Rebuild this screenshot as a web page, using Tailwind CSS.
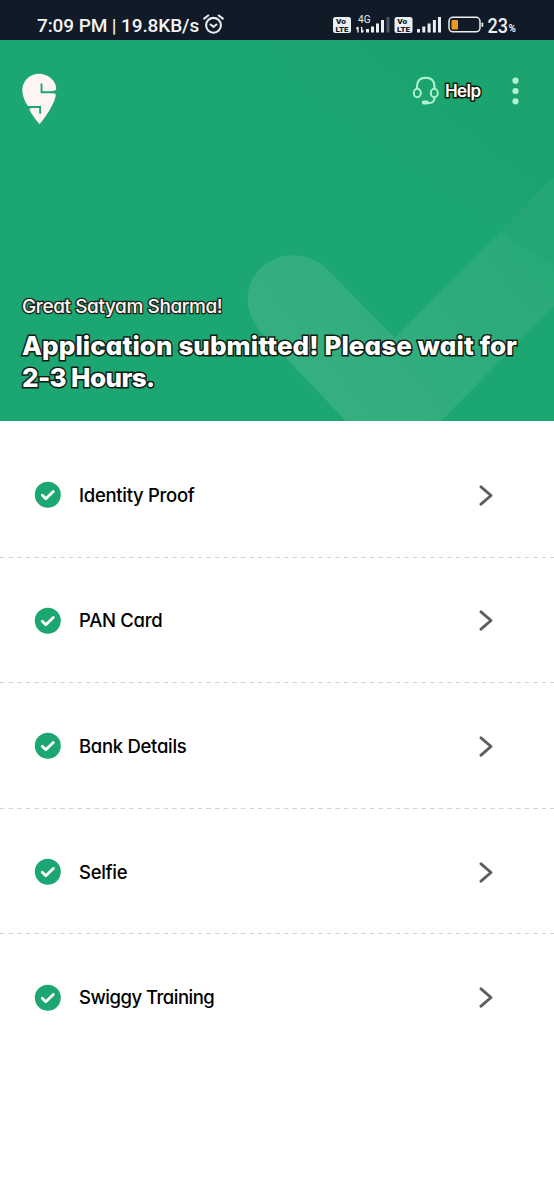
<!DOCTYPE html>
<html lang="en">
  <head>
    <meta charset="UTF-8" />
    <meta name="viewport" content="width=device-width, initial-scale=1.0" />
    <title>Application Status</title>
    <script src="https://cdn.jsdelivr.net/npm/@tailwindcss/browser@4"></script>
  </head>

  <body class="min-h-screen bg-white text-black font-[Inter,sans-serif] [font-feature-settings:'cv11'] overflow-x-hidden">
    <!-- Status bar -->
    <div class="h-10 bg-[#111b27] flex items-center justify-between pl-[37px] pr-[36px] pt-[11px] text-[#f4f4f4] font-[Roboto,sans-serif]">
      <div class="flex items-center gap-1">
        <span class="text-[19px] leading-[28px] font-medium whitespace-nowrap tracking-[-0.1px]">7:09 PM | 19.8KB/s</span>
        <svg class="w-[21px] h-[20px] -mt-[3px]" viewBox="0 0 21 20" fill="none" stroke="#e8ecf0" stroke-width="2.1" stroke-linecap="round">
          <circle cx="10.5" cy="11.3" r="7.4" />
          <path d="M1.2 4.6L5.2 1.500M19.8 4.6L15.8 1.500M7.6 10.500l2.9 2.4L13.4 10.500" />
        </svg>
      </div>
      <svg class="w-[185px] h-[24px] -mt-[3px]" viewBox="333 12 185 24" fill="#eceff2">
        <rect x="333" y="17" width="18" height="16" rx="2.5" />
        <rect x="394.500" y="17" width="18" height="16" rx="2.5" />
        <g fill="#111b27" font-family="Roboto, sans-serif" font-weight="900" font-size="7.8">
          <text x="336" y="24.300" textLength="10" lengthAdjust="spacingAndGlyphs">Vo</text>
          <text x="335.500" y="31.900" textLength="13" lengthAdjust="spacingAndGlyphs">LTE</text>
          <text x="397.200" y="24.300" textLength="10" lengthAdjust="spacingAndGlyphs">Vo</text>
          <text x="397" y="31.900" textLength="13" lengthAdjust="spacingAndGlyphs">LTE</text>
        </g>
        <text x="358" y="23" font-family="Roboto, sans-serif" font-size="10.500" textLength="12.500" lengthAdjust="spacingAndGlyphs">4G</text>
        <path d="M358 27v5.500M356.300 29l1.700-2M361.700 27v5.500M361.700 32.500l1.700-2" fill="none" stroke="#eceff2" stroke-width="1.400" />
        <path d="M366 29h3v3.500h-3zM371 26.500h3v6h-3zM376 23.500h3v9h-3zM381 20h3v12.500h-3z" />
        <path d="M386.500 17h3v15.500h-3z" fill="#4d5763" />
        <path d="M417 29h3v3.500h-3zM422.300 26.500h3v6h-3zM427.600 23.500h3v9h-3zM432.900 20h3v12.500h-3zM438 17h3v15.500h-3z" />
        <rect x="449" y="17.300" width="31" height="14.500" rx="4" fill="none" stroke="#eceff2" stroke-width="1.500" />
        <rect x="451.500" y="20" width="6.500" height="9.500" rx="1" fill="#ed9a1f" />
        <rect x="481.500" y="22.500" width="1.700" height="4.500" rx=".8" />
        <text x="487.500" y="32.500" font-family="Roboto, sans-serif" font-size="19.500" font-weight="500" textLength="20.500" lengthAdjust="spacingAndGlyphs">23</text>
        <text x="508.500" y="32.200" font-family="Roboto, sans-serif" font-size="10" font-weight="700" textLength="8.500">%</text>
      </svg>
    </div>

    <header class="relative h-[381px] bg-[#1ca672] overflow-hidden flex flex-col justify-between">
      <!-- Background tick -->
      <svg class="absolute inset-0 w-full h-full" viewBox="0 40 554 381" fill="none">
        <defs>
          <linearGradient id="tick" gradientUnits="userSpaceOnUse" x1="350" y1="390" x2="570" y2="210">
            <stop stop-color="#35af80" />
            <stop offset="1" stop-color="#25a976" />
          </linearGradient>
          <linearGradient id="shade" gradientUnits="userSpaceOnUse" x1="500" y1="40" x2="390" y2="180">
            <stop stop-color="#1ba26f" />
            <stop offset="1" stop-color="#1ca671" />
          </linearGradient>
        </defs>
        <path d="M278 40C288 85 315 105 360 136L554 263V40z" fill="url(#shade)" />
        <path d="M327 269L395 338L554 178V306L441 421H346L262 333C247 317 244 296 252 280C267 252 304 247 327 269z" fill="url(#tick)" />
        <path d="M500 232L554 178V265z" fill="#24a675" />
      </svg>

      <div class="relative flex items-start justify-between pl-[22px] pr-[35px] pt-[33px]">
        <svg class="w-[35px] h-[52px]" viewBox="22 73 35 52">
          <path d="M39.300 73.800C46.500 73.800 54.500 79 56 86.500C56.500 89.200 56.300 90 54.800 90.400C51 91.300 46 91.200 42.500 91.200V83.600H40.600V93.200C46 93.500 51 93 55.600 93.800C56.300 96 54 102 51.800 106C48.500 112.500 43.800 119.500 39.500 124.200C36 120.500 32.300 115 29.400 109.800C29 108.300 30.500 107.900 34 107.900H39.200V113.800H41.100V105.900H28C24.800 102 22 94.500 22.300 89.500C22.800 80.500 30 73.800 39.300 73.800Z" fill="#fef4f1" />
        </svg>
        <div class="flex items-center pt-[3px]">
          <svg class="w-[27px] h-[30px]" viewBox="412 76 27 30" fill="none" stroke="#b3f3cf" stroke-width="2">
            <path d="M417 89V86.500C417 80.500 420.500 77.800 425.700 77.800S434.500 80.500 434.500 86.500V89" />
            <ellipse cx="417.300" cy="93" rx="3.500" ry="4.200" />
            <ellipse cx="434.300" cy="93" rx="3.500" ry="4.200" />
            <path d="M434.500 97.500C434.500 101.500 433 103 429.500 103H424" />
            <rect x="422.800" y="101.500" width="5" height="2" rx="1" />
          </svg>
          <span class="ml-[6px] w-[67px] text-[17px] leading-[24px] font-semibold tracking-[-0.6px] text-white [-webkit-text-stroke:3px_#101c16] [paint-order:stroke_fill]">Help</span>
          <svg class="w-[7px] h-[28px]" viewBox="0 0 7 28" fill="#b3f3cf">
            <circle cx="3.500" cy="3.700" r="3.100" />
            <circle cx="3.500" cy="14" r="3.100" />
            <circle cx="3.500" cy="24.300" r="3.100" />
          </svg>
        </div>
      </div>

      <div class="relative pl-[22px] pb-[27px] text-white [paint-order:stroke_fill] whitespace-nowrap">
        <p class="text-[19px] leading-[26px] font-medium tracking-[-0.4px] text-[#fff3f0] [-webkit-text-stroke:2.6px_#1b2520]">Great Satyam Sharma!</p>
        <h1 class="mt-[10px] text-[26px] leading-[32px] font-extrabold [-webkit-text-stroke:3px_#101c16]">
          <span class="tracking-[0.07px]">Application submitted! Please wait for</span><br />
          <span class="tracking-[-0.6px]">2-3 Hours.</span>
        </h1>
      </div>
    </header>

    <main class="pt-[11px]">
      <ul id="steps"></ul>
    </main>

    <script>
      const steps = ["Identity Proof", "PAN Card", "Bank Details", "Selfie", "Swiggy Training"];

      document.getElementById("steps").innerHTML = steps
        .map(
          (step, i) => `
          <li class="relative h-[125.6px] flex items-center pl-[34px] pr-[60px]">
            <svg class="w-[27px] h-[27px]" viewBox="0 0 27 27" fill="none">
              <circle cx="13.800" cy="13.800" r="13" fill="#1ca672" />
              <path d="M8.300 14.300l3.500 3.500 7.500-7.300" stroke="#fff" stroke-width="2.800" stroke-linecap="round" stroke-linejoin="round" />
            </svg>
            <span class="ml-[18px] flex-1 text-[18.5px] leading-[26px] font-medium ${step === "Swiggy Training" ? "tracking-[-0.5px]" : "tracking-[-0.3px]"}">${step}</span>
            <svg class="w-[16px] h-[22px]" viewBox="0 0 16 22" fill="none">
              <path d="M3 2.800L13 11.500L3 20.200" stroke="#5e5e60" stroke-width="2.900" stroke-linecap="round" stroke-linejoin="round" />
            </svg>
            ${i < steps.length - 1 ? '<svg class="absolute left-0 bottom-0 w-full h-px"><path d="M0 .5H554" stroke="#d2d2d2" stroke-dasharray="4.600 4" /></svg>' : ""}
          </li>`
        )
        .join("");
    </script>
  </body>
</html>
